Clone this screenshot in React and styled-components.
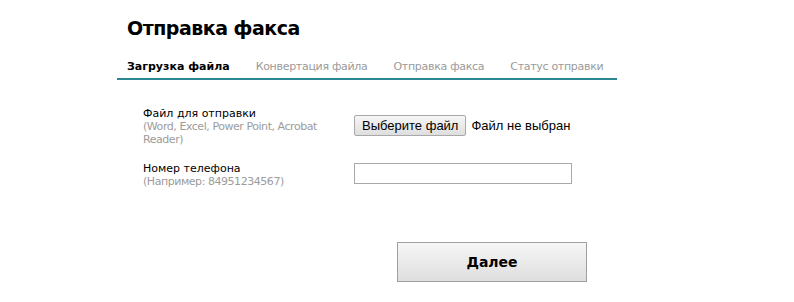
import React from "react";
import styled, { createGlobalStyle } from "styled-components";

const Global = createGlobalStyle`
  html, body { margin: 0; padding: 0; background: #fff; }
  body { font-family: "DejaVu Sans", Verdana, sans-serif; color: #000; }
`;

const Page = styled.div`
  width: 500px;
  margin-left: 117px;
  padding-top: 15px;
`;

const Title = styled.h1`
  margin: 0;
  padding-left: 10px;
  font-size: 19px;
  font-weight: bold;
  line-height: 26px;
  letter-spacing: -0.5px;
`;

const Tabs = styled.nav`
  display: flex;
  gap: 26px;
  padding: 0 10px;
  margin-top: 14px;
  align-items: center;
  border-bottom: 2px solid #2b8791;
  box-sizing: border-box;
  height: 25px;
`;

const Tab = styled.span`
  font-size: 11px;
  font-weight: ${(p) => (p.$active ? "bold" : "normal")};
  letter-spacing: ${(p) => (p.$active ? "0" : "-0.3px")};
  color: ${(p) => (p.$active ? "#000" : "#9a9a9a")};
  white-space: nowrap;
`;

const Form = styled.div`
  padding-left: 26px;
  margin-top: 27px;
  display: flex;
  flex-direction: column;
  gap: 16px;
`;

const Row = styled.div`
  display: grid;
  grid-template-columns: 211px auto;
  align-items: start;
`;

const Label = styled.div`
  font-size: 11px;
  line-height: 13px;
  width: 185px;
`;

const Hint = styled.div`
  font-size: 11px;
  line-height: 13px;
  color: #9c9c9c;
  letter-spacing: -0.45px;
`;

const FileWrap = styled.div`
  display: flex;
  align-items: center;
  gap: 5px;
  margin-top: 8px;
  font-family: "Liberation Sans", Arial, sans-serif;
  font-size: 13px;
`;

const FileButton = styled.button`
  font-family: "Liberation Sans", Arial, sans-serif;
  font-size: 13px;
  height: 21px;
  padding: 0 7px;
  border: 1px solid #a9a9a9;
  border-radius: 2px;
  background: linear-gradient(#f6f6f6, #dedede);
  color: #000;
`;

const TextInput = styled.input`
  width: 218px;
  height: 21px;
  box-sizing: border-box;
  border: 1px solid #a9a9a9;
  margin-top: 1px;
  padding: 0 3px;
`;

const Submit = styled.button`
  margin-top: 54px;
  margin-left: 280px;
  width: 190px;
  height: 40px;
  border: 1px solid #a0a0a0;
  background: linear-gradient(#f6f6f6, #dedede);
  font-family: "DejaVu Sans", Verdana, sans-serif;
  font-size: 14px;
  font-weight: bold;
  color: #000;
`;

export default function App() {
  return (
    <>
      <Global />
      <Page>
        <Title>Отправка факса</Title>
        <Tabs>
          <Tab $active>Загрузка файла</Tab>
          <Tab>Конвертация файла</Tab>
          <Tab>Отправка факса</Tab>
          <Tab>Статус отправки</Tab>
        </Tabs>
        <Form>
          <Row>
            <Label>
              Файл для отправки
              <Hint>(Word, Excel, Power Point, Acrobat Reader)</Hint>
            </Label>
            <FileWrap>
              <FileButton type="button">Выберите файл</FileButton>
              <span>Файл не выбран</span>
            </FileWrap>
          </Row>
          <Row>
            <Label>
              Номер телефона
              <Hint>(Например: 84951234567)</Hint>
            </Label>
            <TextInput type="text" />
          </Row>
        </Form>
        <Submit type="button">Далее</Submit>
      </Page>
    </>
  );
}
